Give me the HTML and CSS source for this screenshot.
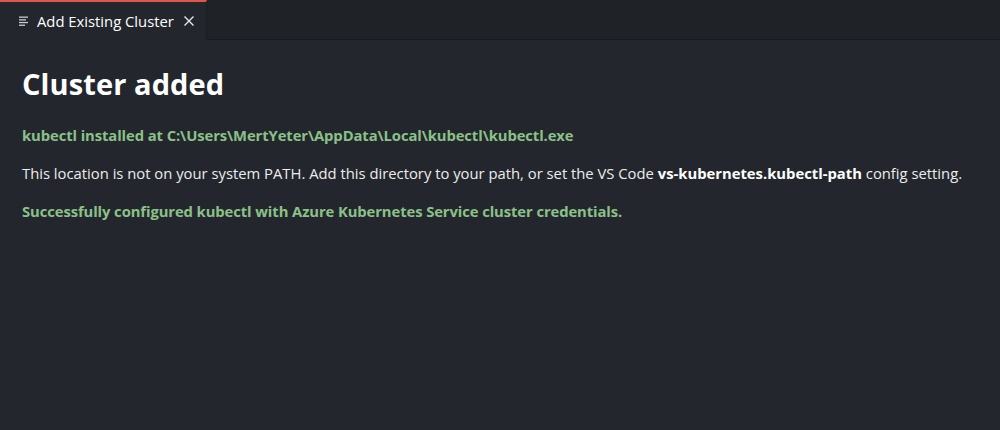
FILE: index.html
```html
<!DOCTYPE html>
<html>
<head>
<meta charset="utf-8">
<link rel="stylesheet" href="styles.css">
</head>
<body>
<div class="tabbar">
  <div class="tab">
    <svg class="tab-icon" width="12" height="12" viewBox="0 0 12 12">
      <rect x="1" y="1.5" width="9" height="1.3" fill="#c5c8cc"/>
      <rect x="1" y="4.2" width="7" height="1.3" fill="#c5c8cc"/>
      <rect x="1" y="6.9" width="9" height="1.3" fill="#c5c8cc"/>
      <rect x="1" y="9.6" width="6" height="1.3" fill="#c5c8cc"/>
    </svg>
    <span class="tab-label">Add Existing Cluster</span>
    <svg class="tab-close" width="12" height="12" viewBox="0 0 12 12">
      <path d="M1.5 1.5 L10.5 10.5 M10.5 1.5 L1.5 10.5" stroke="#e6e6e6" stroke-width="1.4" fill="none"/>
    </svg>
  </div>
  <div class="tab-rest"></div>
</div>
<main class="content">
  <h1 class="title">Cluster added</h1>
  <p class="ok">kubectl installed at C:\Users\MertYeter\AppData\Local\kubectl\kubectl.exe</p>
  <p class="msg">This location is not on your system PATH. Add this directory to your path, or set the VS Code <b>vs-kubernetes.kubectl-path</b> config setting.</p>
  <p class="ok">Successfully configured kubectl with Azure Kubernetes Service cluster credentials.</p>
</main>
</body>
</html>
```
FILE: styles.css
```css
html, body {
  margin: 0;
  padding: 0;
  height: 100%;
  background: #23272d;
  font-family: "Open Sans", "Noto Sans", sans-serif;
  color: #e8e8e8;
}
.tabbar {
  display: flex;
  height: 40px;
  background: #1f2327;
}
.tab {
  display: flex;
  align-items: center;
  width: 207px;
  box-sizing: border-box;
  padding-left: 18px;
  background: #23272d;
  border-top: 2px solid #e0574a;
  border-right: 1px solid #1a1d21;
}
.tab-icon {
  margin-right: 7px;
}
.tab-label {
  font-size: 14.8px;
  color: #ffffff;
  margin-right: 9px;
}
.tab-rest {
  flex: 1;
  border-bottom: 1px solid #181b1f;
}
.content {
  padding: 24px 22px 0 22px;
}
.title {
  margin: 0 0 21px 0;
  font-size: 29px;
  font-weight: 700;
  color: #ffffff;
  letter-spacing: 0.1px;
}
p {
  margin: 0 0 15px 0;
  font-size: 14.8px;
  line-height: 23px;
}
.ok {
  font-weight: 700;
  color: #8bc188;
  letter-spacing: -0.09px;
}
.msg {
  color: #ececec;
}
.msg b {
  color: #ffffff;
}
```
